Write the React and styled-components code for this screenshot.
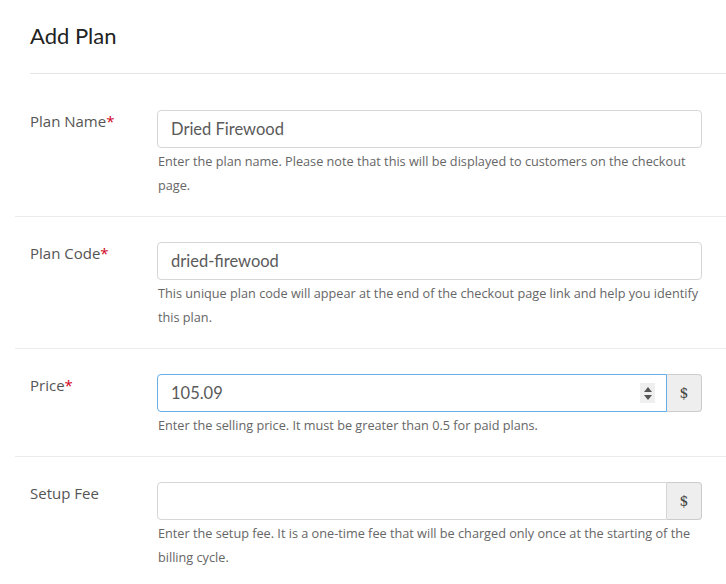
import React from 'react'
import styled, { createGlobalStyle } from 'styled-components'

const Global = createGlobalStyle`
  html, body { margin: 0; padding: 0; background: #fff; }
  body { font-family: "Open Sans", Lato, sans-serif; }
`

const Page = styled.div`
  width: 726px;
  overflow: hidden;
`

const Header = styled.div`
  margin-left: 30px;
  height: 74px;
  border-bottom: 1px solid #e5e5e5;
  box-sizing: border-box;
  padding-top: 22px;
`

const Title = styled.h3`
  margin: 0;
  font-family: Lato, sans-serif;
  font-size: 22px;
  font-weight: 400;
  color: #222;
  line-height: 28px;
`

const Row = styled.div`
  display: grid;
  grid-template-columns: 127px 545px;
  margin-left: 15px;
  padding: ${p => p.$top || 25}px 0 19px 15px;
  border-bottom: ${p => (p.$last ? 'none' : '1px solid #ececec')};
`

const Label = styled.label`
  font-size: 15px;
  color: #555;
  padding-top: 1px;
  line-height: 20px;
`

const Req = styled.span`
  color: #d0021b;
`

const Field = styled.div`
  display: flex;
  flex-direction: column;
`

const Group = styled.div`
  display: flex;
  height: 38px;
  position: relative;
`

const Input = styled.input`
  flex: 1;
  min-width: 0;
  height: 38px;
  box-sizing: border-box;
  padding: 0 13px;
  font-family: Lato, sans-serif;
  font-size: 16.5px;
  color: #5a5a5a;
  border: 1px solid ${p => (p.$focus ? '#66afe9' : '#d6d6d6')};
  border-radius: ${p => (p.$addon ? '4px 0 0 4px' : '4px')};
  outline: none;
  background: #fff;
`

const Addon = styled.span`
  width: 35px;
  height: 38px;
  box-sizing: border-box;
  display: flex;
  align-items: center;
  justify-content: center;
  background: #eeeeee;
  border: 1px solid #ccc;
  border-left: none;
  border-radius: 0 4px 4px 0;
  font-family: "DejaVu Serif", serif;
  font-size: 14px;
  color: #444;
`

const Spinner = styled.div`
  position: absolute;
  right: 47px;
  top: 9px;
  width: 15px;
  height: 20px;
  background: #efefef;
  display: flex;
  flex-direction: column;
  align-items: center;
  justify-content: center;
  gap: 3px;
`

const Help = styled.p`
  margin: 0;
  padding-top: 1px;
  padding-left: 1px;
  font-size: 12.7px;
  line-height: 24px;
  color: #666;
`

const Arrow = ({ up }) => (
  <svg width="8" height="5" viewBox="0 0 8 5">
    <path d={up ? 'M0 5 L4 0 L8 5 Z' : 'M0 0 L4 5 L8 0 Z'} fill="#555" />
  </svg>
)

export default function App() {
  return (
    <Page>
      <Global />
      <Header>
        <Title>Add Plan</Title>
      </Header>
      <Row $top={36}>
        <Label>Plan Name<Req>*</Req></Label>
        <Field>
          <Group><Input defaultValue="Dried Firewood" /></Group>
          <Help>Enter the plan name. Please note that this will be displayed to customers on the checkout page.</Help>
        </Field>
      </Row>
      <Row>
        <Label>Plan Code<Req>*</Req></Label>
        <Field>
          <Group><Input defaultValue="dried-firewood" /></Group>
          <Help>This unique plan code will appear at the end of the checkout page link and help you identify this plan.</Help>
        </Field>
      </Row>
      <Row>
        <Label>Price<Req>*</Req></Label>
        <Field>
          <Group>
            <Input $addon $focus defaultValue="105.09" />
            <Spinner><Arrow up /><Arrow /></Spinner>
            <Addon>$</Addon>
          </Group>
          <Help>Enter the selling price. It must be greater than 0.5 for paid plans.</Help>
        </Field>
      </Row>
      <Row $last>
        <Label>Setup Fee</Label>
        <Field>
          <Group>
            <Input $addon />
            <Addon>$</Addon>
          </Group>
          <Help>Enter the setup fee. It is a one-time fee that will be charged only once at the starting of the billing cycle.</Help>
        </Field>
      </Row>
    </Page>
  )
}
